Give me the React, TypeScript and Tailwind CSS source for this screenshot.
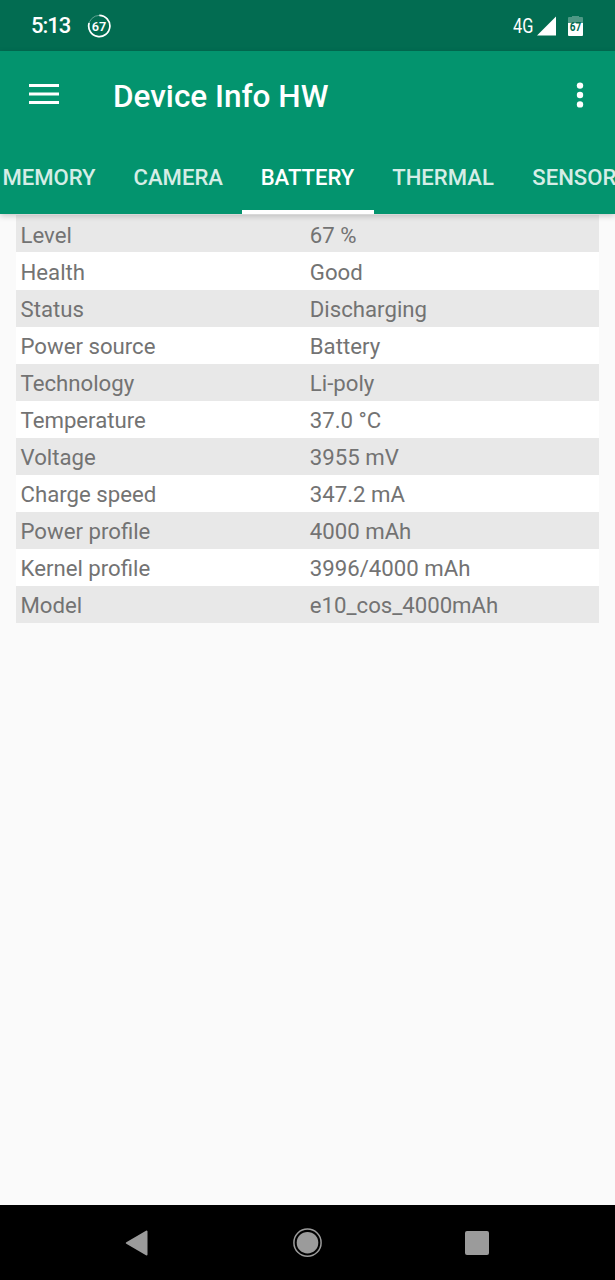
const rows = [
  ["Level", "67 %"],
  ["Health", "Good"],
  ["Status", "Discharging"],
  ["Power source", "Battery"],
  ["Technology", "Li-poly"],
  ["Temperature", "37.0 °C"],
  ["Voltage", "3955 mV"],
  ["Charge speed", "347.2 mA"],
  ["Power profile", "4000 mAh"],
  ["Kernel profile", "3996/4000 mAh"],
  ["Model", "e10_cos_4000mAh"],
];

function StatusBar() {
  return (
    <div className="flex h-[51px] shrink-0 items-center bg-[#026c51] pl-[31px] pr-[31px] text-white">
      <span className="w-[56px] pt-px text-[22px] leading-none font-medium tracking-[-1px]">5:13</span>
      <svg width="24" height="24" viewBox="0 0 24 24" className="mt-px">
        <circle cx="12.3" cy="12" r="10.6" fill="none" stroke="#5fa391" strokeWidth="1" />
        <path d="M12.3 1.4A10.6 10.6 0 1 1 2.1 9" fill="none" stroke="#fff" strokeWidth="1.7" />
        <text x="12" y="16.5" textAnchor="middle" fill="#fff" fontSize="13.5" fontWeight="600" fontFamily="Roboto, sans-serif" textLength="14.5" lengthAdjust="spacingAndGlyphs">67</text>
      </svg>
      <span className="ml-auto w-[24px] text-[20px] leading-none whitespace-nowrap">
        <span className="inline-block origin-left scale-x-[0.82]">4G</span>
      </span>
      <svg width="20" height="20" viewBox="0 0 20 20">
        <path d="M0 19.5L19 .5V19.5Z" fill="#fff" />
      </svg>
      <svg width="16" height="20" viewBox="0 0 16 20" className="ml-[11px]">
        <path d="M0 7V2Q0 1 1 1H4V0H11V1H14Q15 1 15 2V7Z" fill="#4e9885" />
        <path d="M0 7H15V19Q15 20 14 20H1Q0 20 0 19Z" fill="#fff" />
        <text x="7.5" y="14.5" textAnchor="middle" fill="#026c51" fontSize="12" fontWeight="700" fontFamily="Roboto, sans-serif" textLength="11.5" lengthAdjust="spacingAndGlyphs">67</text>
      </svg>
    </div>
  );
}

function Toolbar() {
  return (
    <div className="flex h-[89px] items-center pl-[29px] pr-[31px] text-white">
      <svg width="30" height="20" viewBox="0 0 30 20" className="mb-[3px]">
        <path d="M0 1.5H30M0 10H30M0 18.5H30" stroke="#fff" strokeWidth="2.8" />
      </svg>
      <h1 className="ml-[54px] mt-[2px] text-[31.5px] leading-none font-medium">Device Info HW</h1>
      <svg width="8" height="26" viewBox="0 0 8 26" className="ml-auto mb-px">
        <circle cx="4" cy="3.6" r="3.2" fill="#fff" />
        <circle cx="4" cy="13" r="3.2" fill="#fff" />
        <circle cx="4" cy="22.4" r="3.2" fill="#fff" />
      </svg>
    </div>
  );
}

function Tabs() {
  const base = "flex h-[74px] shrink-0 items-center justify-center whitespace-nowrap";
  return (
    <nav className="-ml-[17px] flex text-[22.1px] leading-none font-medium text-[#d5ede6]">
      <div className={base + " w-[132px]"}>MEMORY</div>
      <div className={base + " w-[126.5px]"}>CAMERA</div>
      <div className={base + " w-[132px] border-b-4 border-white pt-[4px] text-white"}>BATTERY</div>
      <div className={base + " w-[139px]"}>THERMAL</div>
      <div className={base + " w-[137px]"}>SENSORS</div>
    </nav>
  );
}

function NavigationBar() {
  return (
    <div className="flex h-[75px] shrink-0 items-center bg-black pl-[125px]">
      <svg width="24" height="28" viewBox="0 0 24 28">
        <path d="M1.8 14L21.5 2.6V25.4Z" fill="#9b9b9b" stroke="#9b9b9b" strokeWidth="2" strokeLinejoin="round" />
      </svg>
      <svg width="30" height="30" viewBox="0 0 30 30" className="ml-[144px]">
        <circle cx="14.5" cy="14.7" r="13.6" fill="none" stroke="#9b9b9b" strokeWidth="1.5" />
        <circle cx="14.5" cy="14.7" r="10.8" fill="#9b9b9b" />
      </svg>
      <div className="ml-[142px] size-[24px] rounded-[2px] bg-[#9b9b9b]" />
    </div>
  );
}

export default function App() {
  return (
    <div className="flex h-[1280px] w-[615px] flex-col overflow-hidden bg-[#fafafa] font-['Roboto',sans-serif]">
      <StatusBar />
      <header className="relative h-[163px] shrink-0 overflow-visible bg-[#03946e] shadow-[0_2px_6px_rgba(0,0,0,0.2)]">
        <Toolbar />
        <Tabs />
      </header>
      <main className="flex-1 px-4 pt-[1.4px]">
        {rows.map(([label, value], i) => (
          <div
            key={label}
            className={"flex h-[37.07px] items-center pl-[4.5px] text-[22.2px] leading-none text-[#737373] " + (i % 2 ? "bg-white" : "bg-[#e8e8e8]")}
          >
            <span className="w-[289.3px] pt-[2px]">{label}</span>
            <span className="pt-[2px]">{value}</span>
          </div>
        ))}
      </main>
      <NavigationBar />
    </div>
  );
}
